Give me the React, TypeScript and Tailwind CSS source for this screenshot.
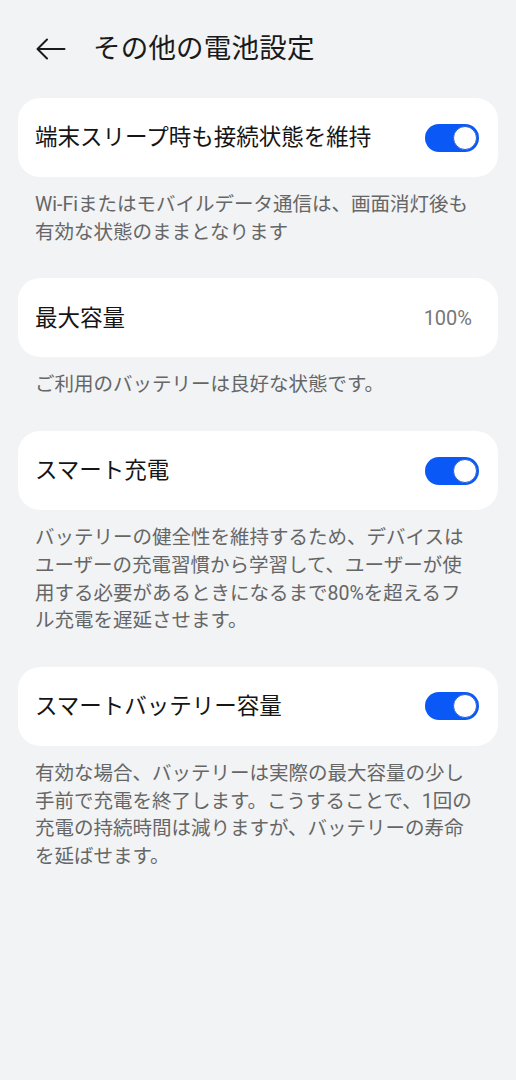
import React from "react";

const Toggle = () => (
  <div className="w-[54px] h-[28px] rounded-full bg-[#0a59f7] flex items-center justify-end pr-[2px]">
    <div className="w-[24px] h-[24px] rounded-full bg-white border border-[#2a5fd0]" />
  </div>
);

type Section = {
  title: string;
  right: React.ReactNode;
  desc: string[];
};

const sections: Section[] = [
  {
    title: "端末スリープ時も接続状態を維持",
    right: <Toggle />,
    desc: ["Wi-Fiまたはモバイルデータ通信は、画面消灯後も", "有効な状態のままとなります"],
  },
  {
    title: "最大容量",
    right: <span className="text-[20px] text-[#777777] pr-[7px]">100%</span>,
    desc: ["ご利用のバッテリーは良好な状態です。"],
  },
  {
    title: "スマート充電",
    right: <Toggle />,
    desc: [
      "バッテリーの健全性を維持するため、デバイスは",
      "ユーザーの充電習慣から学習して、ユーザーが使",
      "用する必要があるときになるまで80%を超えるフ",
      "ル充電を遅延させます。",
    ],
  },
  {
    title: "スマートバッテリー容量",
    right: <Toggle />,
    desc: [
      "有効な場合、バッテリーは実際の最大容量の少し",
      "手前で充電を終了します。こうすることで、1回の",
      "充電の持続時間は減りますが、バッテリーの寿命",
      "を延ばせます。",
    ],
  },
];

export default function App() {
  return (
    <div
      className="w-[516px] min-h-[1080px] bg-[#f1f3f5] text-[#1a1a1a]"
      style={{ fontFamily: '"Roboto", "Noto Sans CJK JP", sans-serif' }}
    >
      <div className="h-[98px] flex items-center pl-[36px]">
        <svg width="30" height="22" viewBox="0 0 30 22" fill="none" stroke="#1a1a1a" strokeWidth="2" strokeLinecap="round" strokeLinejoin="round">
          <path d="M28.5 11H2" />
          <path d="M11 1.5L1.5 11L11 20.5" />
        </svg>
        <h1 className="ml-[27px] text-[27.5px] font-normal leading-none tracking-[0.2px]">その他の電池設定</h1>
      </div>
      {sections.map((s, i) => (
        <div key={i}>
          <div className="mx-[18px] h-[79px] rounded-[22px] bg-white flex items-center justify-between pl-[17px] pr-[19px]">
            <span className="text-[22.5px] font-normal leading-none text-[#151515]">{s.title}</span>
            {s.right}
          </div>
          <div className="px-[35px] pt-[14px] pb-[32px] text-[19.5px] leading-[27.7px] text-[#666666]">
            {s.desc.map((d, j) => (
              <div key={j} className="whitespace-nowrap">{d}</div>
            ))}
          </div>
        </div>
      ))}
    </div>
  );
}
